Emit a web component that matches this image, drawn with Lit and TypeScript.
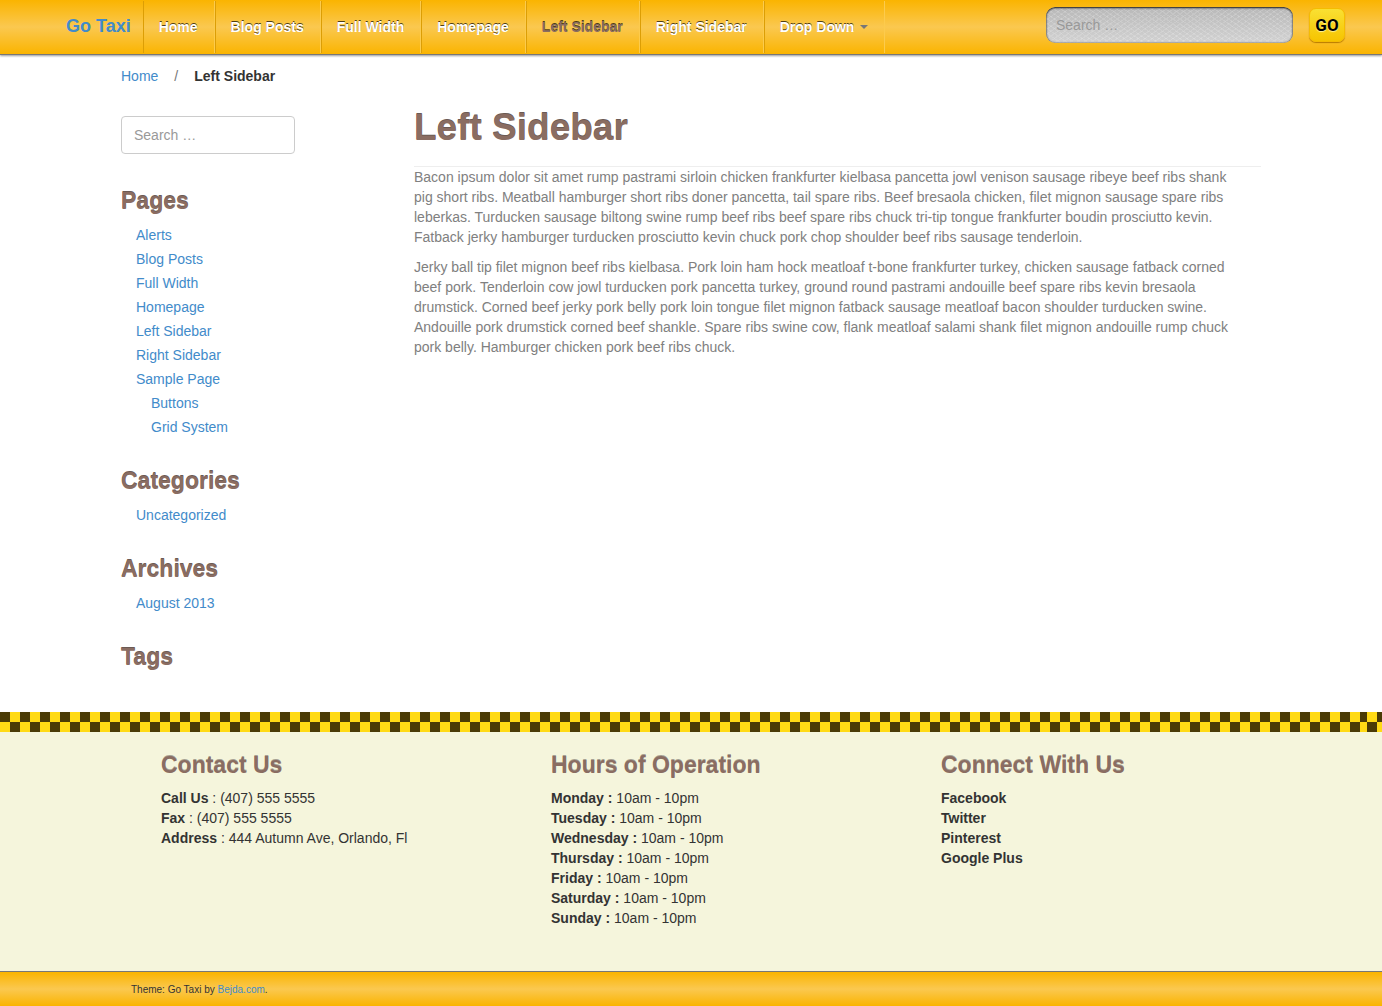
import { LitElement, html, css } from "lit";
import { customElement } from "lit/decorators.js";

interface Page {
  label: string;
  child?: boolean;
}

const NAV = ["Home", "Blog Posts", "Full Width", "Homepage", "Left Sidebar", "Right Sidebar"];

const PAGES: Page[] = [
  { label: "Alerts" },
  { label: "Blog Posts" },
  { label: "Full Width" },
  { label: "Homepage" },
  { label: "Left Sidebar" },
  { label: "Right Sidebar" },
  { label: "Sample Page" },
  { label: "Buttons", child: true },
  { label: "Grid System", child: true },
];

const PARAGRAPHS = [
  "Bacon ipsum dolor sit amet rump pastrami sirloin chicken frankfurter kielbasa pancetta jowl venison sausage ribeye beef ribs shank pig short ribs. Meatball hamburger short ribs doner pancetta, tail spare ribs. Beef bresaola chicken, filet mignon sausage spare ribs leberkas. Turducken sausage biltong swine rump beef ribs beef spare ribs chuck tri-tip tongue frankfurter boudin prosciutto kevin. Fatback jerky hamburger turducken prosciutto kevin chuck pork chop shoulder beef ribs sausage tenderloin.",
  "Jerky ball tip filet mignon beef ribs kielbasa. Pork loin ham hock meatloaf t-bone frankfurter turkey, chicken sausage fatback corned beef pork. Tenderloin cow jowl turducken pork pancetta turkey, ground round pastrami andouille beef spare ribs kevin bresaola drumstick. Corned beef jerky pork belly pork loin tongue filet mignon fatback sausage meatloaf bacon shoulder turducken swine. Andouille pork drumstick corned beef shankle. Spare ribs swine cow, flank meatloaf salami shank filet mignon andouille rump chuck pork belly. Hamburger chicken pork beef ribs chuck.",
];

const CONTACT = [
  ["Call Us", " : (407) 555 5555"],
  ["Fax", " : (407) 555 5555"],
  ["Address", " : 444 Autumn Ave, Orlando, Fl"],
];

const DAYS = ["Monday", "Tuesday", "Wednesday", "Thursday", "Friday", "Saturday", "Sunday"];

const NETWORKS = ["Facebook", "Twitter", "Pinterest", "Google Plus"];

@customElement("app-root")
export class AppRoot extends LitElement {
  static styles = css`
    :host {
      display: flex;
      flex-direction: column;
      min-height: 100vh;
      background: #fff;
      color: #333;
      font: 14px/20px "Liberation Sans", Arial, sans-serif;
    }
    * {
      box-sizing: border-box;
    }
    a {
      color: #428bca;
      text-decoration: none;
    }
    h1,
    h2,
    p,
    ul {
      margin: 0;
      padding: 0;
    }
    ul {
      list-style: none;
    }
    input,
    button {
      font: inherit;
    }
    input::placeholder {
      color: #999;
      opacity: 1;
    }
    h1,
    h2 {
      color: #8a6d62;
      font-weight: 700;
      text-shadow: 0 -1px 0 #6b5a54;
    }
    h1 {
      font-size: 37px;
      line-height: 42px;
    }
    h2 {
      font-size: 23px;
      line-height: 26px;
    }

    .topbar {
      display: flex;
      align-items: center;
      height: 55px;
      padding: 0 37px 0 66px;
      background: linear-gradient(#fab400, #fac850 50%, #fab400);
      border-bottom: 1px solid #777;
      box-shadow: 0 1px 2px rgba(0, 0, 0, 0.4);
    }
    .brand {
      padding: 0 12px 2px 0;
      font-size: 18px;
      font-weight: 700;
    }
    .menu {
      display: flex;
      height: 52px;
    }
    .menu li {
      display: flex;
      border-left: 1px solid #dc9e05;
      border-right: 1px solid #fccb4d;
    }
    .menu a {
      display: flex;
      align-items: center;
      gap: 6px;
      padding: 0 16px 0 15px;
      color: #fff;
      font-weight: 700;
      text-shadow: 0 -1px 0 rgba(0, 0, 0, 0.7);
    }
    .menu .active {
      color: #8a6d62;
    }
    .caret {
      border: 4px solid transparent;
      border-top-color: #777;
      border-bottom: 0;
    }
    .top-search {
      display: flex;
      align-items: center;
      gap: 16px;
      margin-left: auto;
      padding-bottom: 4px;
    }
    .top-search input {
      width: 247px;
      height: 36px;
      padding: 0 10px;
      border: 0;
      border-radius: 9px;
      background:
        repeating-linear-gradient(35deg, rgba(255, 255, 255, 0.14) 0 1px, transparent 1px 4px),
        repeating-linear-gradient(-35deg, rgba(255, 255, 255, 0.14) 0 1px, transparent 1px 4px),
        linear-gradient(#b8b8b8, #d2d2d2);
      box-shadow: inset 0 1px 2px #222, inset 0 0 2px #555;
    }
    .go {
      width: 36px;
      height: 34px;
      padding: 0;
      border: 1px solid #f5bc00;
      border-radius: 7px;
      background: linear-gradient(#f9e033, #f6c400);
      box-shadow: 0 1px 1px #b87b00;
      color: #000;
      font-family: Roboto, sans-serif;
      font-size: 17px;
      font-weight: 700;
      text-shadow: 0 1px 1px #fdf3a0;
    }

    .container {
      width: 100%;
      max-width: 1170px;
      margin: 0 auto;
      padding: 0 15px;
    }
    .crumbs {
      display: flex;
      gap: 16px;
      padding-top: 11px;
      color: #777;
    }
    .crumbs b {
      color: #333;
    }
    .columns {
      display: grid;
      grid-template-columns: 263px minmax(0, 1fr);
      gap: 30px;
      padding-bottom: 42px;
    }
    .sidebar {
      padding-top: 30px;
    }
    .field {
      display: block;
      width: 174px;
      height: 38px;
      padding: 0 12px;
      border: 1px solid #ccc;
      border-radius: 4px;
      background: #fff;
    }
    .widget {
      padding-top: 34px;
    }
    .widget + .widget {
      padding-top: 28px;
    }
    .links {
      padding: 9px 0 1px 15px;
    }
    .links li {
      height: 24px;
      line-height: 24px;
    }
    .links .child {
      padding-left: 15px;
    }
    .content {
      padding-top: 21px;
      color: #808080;
    }
    .content h1 {
      padding-bottom: 17px;
      border-bottom: 1px solid #eee;
    }
    .content p {
      padding: 0 15px 10px 0;
    }

    .checker {
      display: flex;
      height: 20px;
    }
    .checks {
      flex: 1;
      background: repeating-conic-gradient(#ffda15 0 25%, #4a3b06 0 50%) 0 0 / 20px 20px;
    }
    .seam {
      width: 15px;
      background: repeating-conic-gradient(#4a3b06 0 25%, #ffda15 0 50%) 0 0 / 20px 20px;
    }
    .info {
      flex: 1;
      padding-bottom: 43px;
      background: #f5f5dc;
    }
    .info-grid {
      display: grid;
      grid-template-columns: repeat(3, minmax(0, 1fr));
      max-width: 1170px;
      margin: 0 auto;
      padding-top: 20px;
    }
    .info-grid > div {
      padding-left: 55px;
    }
    .info-grid ul {
      padding-top: 10px;
    }
    .info-grid h2 {
      text-shadow: 0 -1px 0 rgba(90, 80, 76, 0.5);
    }
    .footer {
      height: 35px;
      border-top: 1px solid #777;
      background: linear-gradient(#fab400, #fac850 50%, #fab400);
      font-size: 10px;
      line-height: 36px;
    }
    .footer p {
      padding-left: 10px;
    }
  `;

  private widget(title: string, items: Page[]) {
    return html`
      <section class="widget">
        <h2>${title}</h2>
        ${items.length
          ? html`<ul class="links">
              ${items.map(
                (item) => html`<li class=${item.child ? "child" : ""}><a href="#">${item.label}</a></li>`
              )}
            </ul>`
          : ""}
      </section>
    `;
  }

  render() {
    return html`
      <header class="topbar">
        <a class="brand" href="#">Go Taxi</a>
        <nav>
          <ul class="menu">
            ${NAV.map(
              (label) =>
                html`<li><a class=${label === "Left Sidebar" ? "active" : ""} href="#">${label}</a></li>`
            )}
            <li><a href="#">Drop Down <span class="caret"></span></a></li>
          </ul>
        </nav>
        <form class="top-search" role="search">
          <input type="search" aria-label="Search" placeholder="Search …" />
          <button class="go" type="button">GO</button>
        </form>
      </header>

      <main class="container">
        <nav class="crumbs"><a href="#">Home</a><span>/</span><b>Left Sidebar</b></nav>
        <div class="columns">
          <aside class="sidebar">
            <input class="field" type="search" aria-label="Search" placeholder="Search …" />
            ${this.widget("Pages", PAGES)}
            ${this.widget("Categories", [{ label: "Uncategorized" }])}
            ${this.widget("Archives", [{ label: "August 2013" }])}
            ${this.widget("Tags", [])}
          </aside>
          <article class="content">
            <h1>Left Sidebar</h1>
            ${PARAGRAPHS.map((text) => html`<p>${text}</p>`)}
          </article>
        </div>
      </main>

      <div class="checker"><span class="checks"></span><span class="seam"></span></div>
      <section class="info">
        <div class="info-grid">
          <div>
            <h2>Contact Us</h2>
            <ul>
              ${CONTACT.map(([name, value]) => html`<li><b>${name}</b>${value}</li>`)}
            </ul>
          </div>
          <div>
            <h2>Hours of Operation</h2>
            <ul>
              ${DAYS.map((day) => html`<li><b>${day} :</b> 10am - 10pm</li>`)}
            </ul>
          </div>
          <div>
            <h2>Connect With Us</h2>
            <ul>
              ${NETWORKS.map((name) => html`<li><b>${name}</b></li>`)}
            </ul>
          </div>
        </div>
      </section>
      <footer class="footer">
        <div class="container"><p>Theme: Go Taxi by <a href="#">Bejda.com</a>.</p></div>
      </footer>
    `;
  }
}
